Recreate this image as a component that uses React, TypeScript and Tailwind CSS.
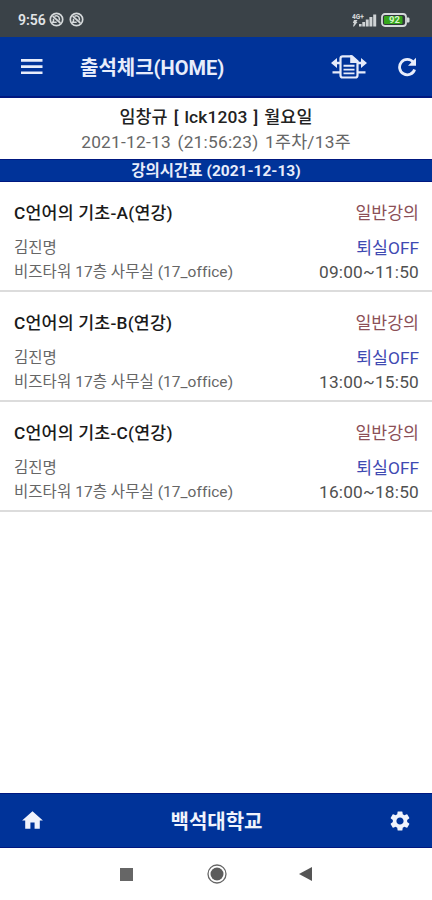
import React from "react";
import { MdHome, MdSettings } from "react-icons/md";

interface Lecture {
  title: string;
  professor: string;
  room: string;
  kind: string;
  status: string;
  time: string;
}

const lectures: Lecture[] = [
  {
    title: "C언어의 기초-A(연강)",
    professor: "김진명",
    room: "비즈타워 17층 사무실 (17_office)",
    kind: "일반강의",
    status: "퇴실OFF",
    time: "09:00~11:50",
  },
  {
    title: "C언어의 기초-B(연강)",
    professor: "김진명",
    room: "비즈타워 17층 사무실 (17_office)",
    kind: "일반강의",
    status: "퇴실OFF",
    time: "13:00~15:50",
  },
  {
    title: "C언어의 기초-C(연강)",
    professor: "김진명",
    room: "비즈타워 17층 사무실 (17_office)",
    kind: "일반강의",
    status: "퇴실OFF",
    time: "16:00~18:50",
  },
];

const SilentIcon: React.FC = () => (
  <svg className="h-[15px] w-[15px]" viewBox="0 0 15 15" fill="none" stroke="#d5d9db">
    <circle cx="7.5" cy="7.5" r="6.2" strokeWidth="1.7" />
    <path d="M3.6 4.2 11.4 11" strokeWidth="1.7" />
    <path d="M5.4 4.3c2.4-1.2 4.9 0 5 2.6v1.6M4.5 6.8v2.1l-.8 1.3h4" strokeWidth="1.5" />
  </svg>
);

const MenuIcon: React.FC = () => (
  <svg className="h-[18px] w-[22px]" viewBox="0 0 22 18" fill="currentColor">
    <path d="M0 1h21.500v2.700H0zM0 7.200h21.500v2.700H0zM0 13.400h21.500v2.700H0z" />
  </svg>
);

const RefreshIcon: React.FC = () => (
  <svg className="h-[20px] w-[20px]" viewBox="0 0 20 20">
    <path
      d="M16.300 5.300A7.700 7.700 0 1 0 17.600 12.500"
      fill="none"
      stroke="currentColor"
      strokeWidth="2.8"
    />
    <path d="M19 .8V8.800H11z" fill="currentColor" />
  </svg>
);

const SignalIcon: React.FC = () => (
  <svg className="h-[14px] w-[25px]" viewBox="0 0 25 14" fill="#cfd3d5">
    <text x="0" y="5.5" fontSize="6.5" fontWeight="900" fontFamily="Roboto, sans-serif">4G+</text>
    <path d="M2 7h3.500L4.300 9h1.200l-3.500 4.500H1L2 10H.8z" />
    <path d="M7 11h2.600v2.500H7zM10.300 9h2.800v4.500h-2.800zM13.800 6.500h2.900v7h-2.900zM17.400 4h3v9.500h-3zM21.200 1.500h3v12h-3z" />
  </svg>
);

const BatteryIcon: React.FC = () => (
  <svg className="h-[14px] w-[29px]" viewBox="0 0 29 14">
    <rect x="1" y="1" width="24" height="12" rx="3" fill="#30363b" stroke="#d5d9db" strokeWidth="1.8" />
    <rect x="3" y="3" width="18.5" height="8" rx="1" fill="#35a51c" />
    <path d="M26 4.500h1.200c1 0 1.300.6 1.300 1.300v2.400c0 .8-.4 1.300-1.300 1.300H26z" fill="#d5d9db" />
    <text x="8" y="10.3" fontSize="9.5" fontWeight="700" fill="#d7f3cc" fontFamily="Roboto, sans-serif">92</text>
  </svg>
);

const TransferIcon: React.FC = () => (
  <svg className="h-[24px] w-[36px]" viewBox="0 0 36 24" fill="none" stroke="#e6ebfa" strokeWidth="2.2">
    <path d="M9.500 4v-.5c0-1.500.8-2.200 2.200-2.200H21l5.500 5V20.200c0 1.600-.8 2.300-2.200 2.300H11.700c-1.400 0-2.200-.7-2.200-2.300z" />
    <path d="M20.300 1.500V7h6z" fill="#e6ebfa" />
    <path d="M12.500 10.800h11M12.500 14.600h11M12.500 18.400h11" strokeWidth="1.9" />
    <path d="M4 8h5.500M26.500 8H32M1.500 17.300h8M26.500 17.300h8" strokeWidth="2.3" />
    <path d="M0 8 6 3v10zM36 8l-6-5v10z" fill="#e6ebfa" stroke="none" />
  </svg>
);

const StatusBar: React.FC = () => (
  <div className="flex h-[37px] shrink-0 items-center justify-between bg-[#3a4248] pt-[2px] pr-[22px] pl-[18px]">
    <div className="flex items-center">
      <span className="w-[31px] text-[14px] font-semibold text-[#e1e4e6]">9:56</span>
      <div className="flex gap-[5px]">
        <SilentIcon />
        <SilentIcon />
      </div>
    </div>
    <div className="flex items-center gap-[4px]">
      <SignalIcon />
      <BatteryIcon />
    </div>
  </div>
);

const LectureRow: React.FC<{ lecture: Lecture }> = ({ lecture }) => (
  <li className="flex h-[110px] flex-col border-b-2 border-[#dcdcdc] pt-[19px] pr-[13px] pl-[14px]">
    <div className="flex h-[26px] items-center justify-between">
      <span className="text-[17.3px] font-medium tracking-[0.2px] text-[#1a1a1a]">{lecture.title}</span>
      <span className="text-[17.3px] font-normal text-[#8c5057]">{lecture.kind}</span>
    </div>
    <div className="mt-[9px] flex h-[24px] items-center justify-between">
      <span className="pt-[2px] text-[15.5px] font-normal text-[#666]">{lecture.professor}</span>
      <span className="pt-[1px] text-[17.3px] font-normal text-[#3f4ab2]">{lecture.status}</span>
    </div>
    <div className="flex h-[25px] items-center justify-between">
      <span className="text-[15.5px] font-normal tracking-[0.05px] text-[#666]">{lecture.room}</span>
      <span className="text-[17.3px] font-normal tracking-[0.2px] text-[#505050]">{lecture.time}</span>
    </div>
  </li>
);

const App: React.FC = () => {
  return (
    <div className="flex h-[900px] w-[432px] flex-col overflow-hidden bg-white font-['Roboto','Noto_Sans_CJK_KR',sans-serif] leading-none whitespace-nowrap">
      <StatusBar />

      <header className="flex h-[61px] shrink-0 items-center border-b-2 border-[#001880] bg-[#003399] pl-[21px] text-[#e8edfb]">
        <MenuIcon />
        <h1 className="ml-[37px] flex-1 pt-[3px] text-[20px] font-bold">출석체크(HOME)</h1>
        <TransferIcon />
        <span className="mr-[15px] ml-[30px] pt-[1px]">
          <RefreshIcon />
        </span>
      </header>

      <section className="flex h-[61px] shrink-0 flex-col items-center pt-[7px]">
        <p className="flex h-[25px] items-center pt-[1px] text-[17.4px] font-medium tracking-[0.1px] text-[#222]">
          <span className="[word-spacing:1.6px]">임창규 [ lck1203 ] 월요일</span>
        </p>
        <p className="flex h-[25px] items-center pt-[1px] text-[17.3px] font-normal tracking-[0.25px] text-[#666]">
          <span className="[word-spacing:2px]">2021-12-13 (21:56:23) 1주차/13주</span>
        </p>
      </section>

      <h2 className="flex h-[23px] shrink-0 items-center justify-center border-y border-[#001880] bg-[#003399] pt-[3px] text-[15.5px] font-bold text-[#e8edfb]">
        강의시간표 (2021-12-13)
      </h2>

      <ul className="flex-1">
        {lectures.map((lecture) => (
          <LectureRow key={lecture.title} lecture={lecture} />
        ))}
      </ul>

      <footer className="flex h-[55px] shrink-0 items-center justify-between border-y border-[#001880] bg-[#003399] px-[20px] text-[#f0f3fc]">
        <MdHome className="size-[25px]" />
        <span className="pt-[2px] text-[20px] font-bold">백석대학교</span>
        <MdSettings className="size-[24px]" />
      </footer>

      <nav className="flex h-[52px] shrink-0 items-center justify-between pr-[120px] pl-[120px]">
        <span className="size-[13px] bg-[#666]" />
        <svg className="ml-[1px] size-[20px]" viewBox="0 0 20 20">
          <circle cx="10" cy="10" r="9" fill="none" stroke="#666" strokeWidth="1.3" />
          <circle cx="10" cy="10" r="6.5" fill="#5c5c5c" />
        </svg>
        <svg className="h-[14px] w-[13px]" viewBox="0 0 13 14">
          <path d="M0 7 13 0v14z" fill="#555" />
        </svg>
      </nav>
    </div>
  );
};

export default App;
